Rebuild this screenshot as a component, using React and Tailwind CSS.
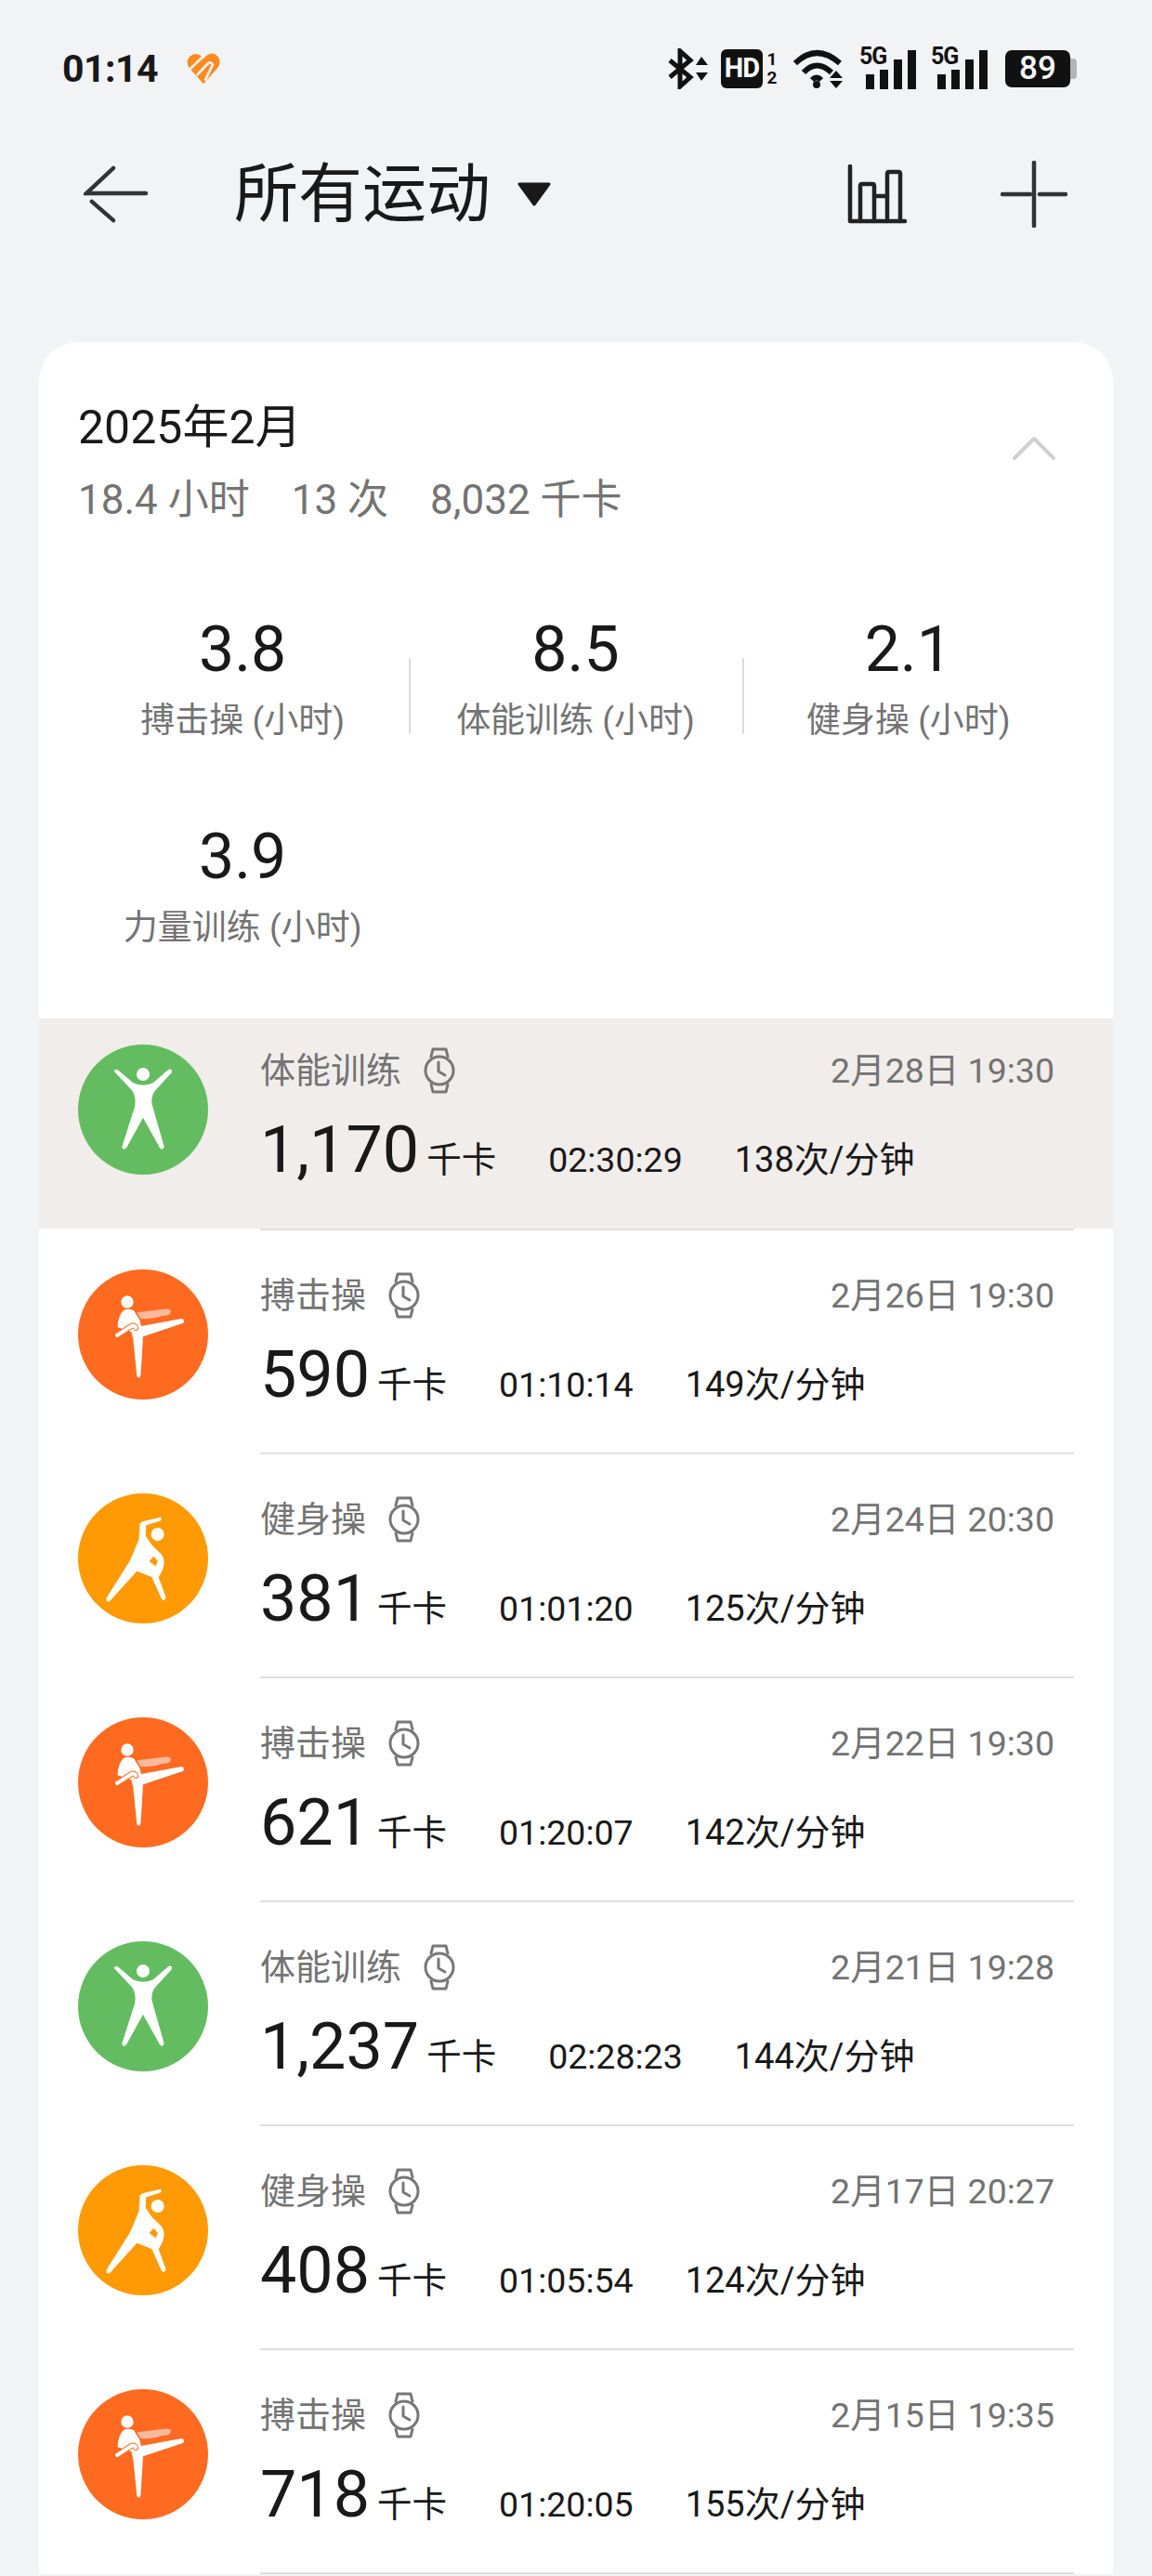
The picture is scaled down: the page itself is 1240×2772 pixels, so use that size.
import React from 'react';

const font = 'font-["Roboto","Noto_Sans_CJK_SC",sans-serif]';

const stats = [
  { value: '3.8', label: '搏击操 (小时)' },
  { value: '8.5', label: '体能训练 (小时)', divider: true },
  { value: '2.1', label: '健身操 (小时)', divider: true },
  { value: '3.9', label: '力量训练 (小时)' },
];

const workouts = [
  { kind: 'fit', name: '体能训练', kcal: '1,170', time: '02:30:29', rate: '138次/分钟', date: '2月28日 19:30' },
  { kind: 'box', name: '搏击操', kcal: '590', time: '01:10:14', rate: '149次/分钟', date: '2月26日 19:30' },
  { kind: 'aer', name: '健身操', kcal: '381', time: '01:01:20', rate: '125次/分钟', date: '2月24日 20:30' },
  { kind: 'box', name: '搏击操', kcal: '621', time: '01:20:07', rate: '142次/分钟', date: '2月22日 19:30' },
  { kind: 'fit', name: '体能训练', kcal: '1,237', time: '02:28:23', rate: '144次/分钟', date: '2月21日 19:28' },
  { kind: 'aer', name: '健身操', kcal: '408', time: '01:05:54', rate: '124次/分钟', date: '2月17日 20:27' },
  { kind: 'box', name: '搏击操', kcal: '718', time: '01:20:05', rate: '155次/分钟', date: '2月15日 19:35' },
];

// figures are drawn in a 420 box
const FitFigure = () => (
  <svg viewBox="72 72 420 420" className="w-full h-full">
    <circle cx="282" cy="168" r="21" fill="#fff" />
    <path fill="#fff" d="M188 158 Q192 148 202 155 L250 196 Q264 203 282 203 Q300 203 314 196 L364 153 Q376 148 375 162 L326 215 Q308 232 310 262 L350 402 Q346 416 336 406 L282 308 L228 406 Q216 416 214 402 L256 270 Q260 240 246 220 Z" />
  </svg>
);

const BoxFigure = () => (
  <svg viewBox="72 75 420 420" className="w-full h-full">
    <circle cx="231" cy="180" r="20" fill="#fff" />
    <path fill="#f9b99c" d="M262 214 L345 204 Q372 198 372 212 Q368 226 346 224 Q310 238 274 234 Z" />
    <path fill="#fff" d="M220 206 Q238 200 252 208 L270 236 L276 258 L406 234 Q418 236 412 248 L282 292 L274 420 Q268 430 262 420 L250 300 L244 276 L200 262 Q200 224 220 206 Z" />
    <path fill="none" stroke="#ff6a21" strokeWidth="18" strokeLinecap="round" d="M198 288 L244 258 Q256 254 258 264" />
    <path fill="none" stroke="#fff" strokeWidth="12" strokeLinecap="round" d="M198 288 L244 258 Q256 254 258 264" />
  </svg>
);

const AerFigure = () => (
  <svg viewBox="72 75 420 420" className="w-full h-full">
    <circle cx="329" cy="207" r="21" fill="#fff" />
    <path fill="#fff" d="M338 152 Q346 158 336 164 L292 178 L290 212 L312 244 L342 272 Q360 298 338 336 L332 346 L356 412 Q350 426 342 416 L310 345 L262 326 L174 424 Q160 428 164 412 L240 292 L268 225 L272 172 Q276 166 286 164 Z" />
    <path fill="#ff9a05" d="M302 294 L316 278 L330 294 L322 310 Z" />
  </svg>
);

const figures = {
  fit: { bg: 'bg-[#64bc61]', Figure: FitFigure },
  box: { bg: 'bg-[#ff6a21]', Figure: BoxFigure },
  aer: { bg: 'bg-[#ff9a05]', Figure: AerFigure },
};

const WatchIcon = () => (
  <svg viewBox="0 0 34 50" className="w-[34px] h-[50px]" fill="none" stroke="#777" strokeWidth="3" strokeLinejoin="round" strokeLinecap="round">
    <path d="M8 10 L10 2 H24 L26 10" />
    <path d="M8 40 L10 48 H24 L26 40" />
    <circle cx="17" cy="25" r="15" />
    <path d="M16 16 V26 L23 30" />
  </svg>
);

const Signal = () => (
  <div className="relative w-[60px] h-[44px]">
    <span className="absolute left-0 top-[-4px] text-[25px] leading-[26px] font-bold text-[#111] font-['Roboto'] tracking-[-1px]">5G</span>
    <div className="absolute bottom-0 left-[7px] flex items-end gap-[6px]">
      <div className="w-[9px] h-[16px] bg-[#111]" />
      <div className="w-[9px] h-[21px] bg-[#111]" />
      <div className="w-[9px] h-[32px] bg-[#111]" />
      <div className="w-[9px] h-[42px] bg-[#111]" />
    </div>
  </div>
);

const StatusBar = () => (
  <div className="h-[148px] flex items-center justify-between pl-[67px] pr-[81px]">
    <div className="flex items-center gap-[28px]">
      <span className="text-[41px] leading-none font-bold text-[#191919] font-['Roboto'] tracking-[-0.5px]">01:14</span>
      <svg viewBox="0 0 40 40" className="w-[42px] h-[36px]">
        <path fill="#ff8a1e" d="M20 38 L3 19 Q-2 11 4 5 Q10 0 16 4 L20 8 L24 4 Q31 -1 37 5 Q42 12 37 19 Z" />
        <path fill="none" stroke="#f1f3f5" strokeWidth="3" d="M3 21 L20 5 M12 28 L25 14 Q29 11 31 15 L22 34" />
      </svg>
    </div>
    <div className="flex items-center">
      <svg viewBox="0 0 44 44" className="w-[44px] h-[44px]" fill="none" stroke="#111" strokeWidth="5">
        <path d="M2 13 L24 31 L13 41 V3 L24 13 L2 31" />
        <path fill="#111" stroke="none" d="M36 9 L43 18 H30 Z M36 35 L43 26 H30 Z" />
      </svg>
      <div className="ml-[13px] w-[45px] h-[42px] rounded-[6px] bg-[#111] flex items-center justify-center text-white text-[29px] font-bold font-['Roboto'] tracking-[-1px]">HD</div>
      <div className="ml-[3px] w-[14px] flex flex-col items-center text-[19px] leading-[20px] font-bold text-[#111] font-['Roboto']">
        <span>1</span>
        <span>2</span>
      </div>
      <svg viewBox="0 0 54 44" className="ml-[16px] w-[54px] h-[44px]" fill="none" stroke="#111" strokeWidth="6">
        <path d="M2 16 Q25 -6 50 16" />
        <path d="M11 26 Q25 11 41 26" />
        <path d="M20 34 Q25 29 30 34" />
        <circle cx="25" cy="39" r="4" fill="#111" stroke="none" />
        <path fill="#111" stroke="none" d="M46 24 L53 32 H39 Z M46 43 L53 35 H39 Z" />
      </svg>
      <div className="ml-[17px]"><Signal /></div>
      <div className="ml-[17px]"><Signal /></div>
      <div className="ml-[20px] flex items-center">
        <div className="w-[70px] h-[40px] rounded-[7px] bg-[#111] flex items-center justify-center text-white text-[35px] font-medium font-['Roboto']">89</div>
        <div className="w-[7px] h-[22px] rounded-r-[4px] bg-[#b4b4b4]" />
      </div>
    </div>
  </div>
);

const NavBar = () => (
  <div className="h-[122px] flex items-center pl-[90px] pr-[99px]">
    <svg viewBox="0 0 72 64" className="w-[70px] h-[64px]" fill="none" stroke="#333" strokeWidth="4.5" strokeLinecap="round">
      <path d="M33 3 L3 31 H69" />
      <path d="M9 40 L33 61" />
    </svg>
    <span className="ml-[92px] text-[69px] leading-none text-[#191919]">所有运动</span>
    <svg viewBox="0 0 36 26" className="ml-[29px] w-[36px] h-[26px]">
      <path fill="#191919" stroke="#191919" strokeWidth="3" strokeLinejoin="round" d="M2 2 H34 L18 24 Z" />
    </svg>
    <svg viewBox="0 0 64 64" className="ml-auto w-[64px] h-[64px]" fill="none" stroke="#222" strokeWidth="4.5" strokeLinecap="round" strokeLinejoin="round">
      <path d="M3 2 V61 H62" />
      <path d="M14 61 V23 Q14 21 16 21 H27 Q29 21 29 23 V61" />
      <path d="M29 34 H43" />
      <path d="M43 61 V10 Q43 8 45 8 H55 Q57 8 57 10 V61" />
    </svg>
    <svg viewBox="0 0 72 72" className="ml-[101px] mr-[-8px] w-[72px] h-[72px]" fill="none" stroke="#333" strokeWidth="4.5" strokeLinecap="round">
      <path d="M2 36 H32" />
      <path d="M42 36 H70" />
      <path d="M36 2 V70" />
    </svg>
  </div>
);

const Stat = ({ value, label, divider }) => (
  <div className="relative flex flex-col items-center">
    {divider && <div className="absolute left-0 top-[49px] w-[2px] h-[82px] bg-[#dcdcdc]" />}
    <div className="text-[68px] leading-[80px] text-[#191919]">{value}</div>
    <div className="mt-[12px] text-[37px] leading-[50px] text-[#737373]">{label}</div>
  </div>
);

const WorkoutRow = ({ item, first }) => {
  const { bg, Figure } = figures[item.kind];
  return (
    <div>
      <div className={first ? 'flex px-[42px] pt-[28px] h-[226px] bg-[#f1edeb]' : 'flex px-[42px] pt-[42px] h-[239px]'}>
        <div className={`w-[140px] h-[140px] rounded-full overflow-hidden shrink-0 ${bg}`}>
          <Figure />
        </div>
        <div className="ml-[56px] flex-1 pr-[21px]">
          <div className="flex items-center h-[56px]">
            <span className="text-[38px] leading-[56px] text-[#737373]">{item.name}</span>
            <span className="ml-[24px] flex"><WatchIcon /></span>
            <span className="ml-auto text-[37.5px] leading-[56px] text-[#737373]">{item.date}</span>
          </div>
          <div className="mt-[27px] flex items-baseline text-[#191919]">
            <span className="text-[70px] leading-[60px]">{item.kcal}</span>
            <span className="ml-[8px] text-[37.5px]">千卡</span>
            <span className="ml-[56px] text-[37.5px]">{item.time}</span>
            <span className="ml-[56px] text-[38px]">{item.rate}</span>
          </div>
        </div>
      </div>
      <div className="ml-[238px] mr-[42px] h-[2px] bg-[#dedede]" />
    </div>
  );
};

export default function App() {
  return (
    <div className={`w-[1240px] h-[2772px] overflow-hidden bg-[#f1f3f5] ${font}`}>
      <StatusBar />
      <NavBar />
      <div className="mt-[98px] mx-[42px] rounded-t-[42px] bg-white">
        <div className="flex justify-between pl-[42px] pr-[62px] pt-[62px]">
          <div>
            <div className="text-[50px] leading-[60px] text-[#191919]">2025年2月</div>
            <div className="mt-[23px] flex gap-[45px] text-[44px] leading-[50px] text-[#737373]">
              <span>18.4 小时</span>
              <span>13 次</span>
              <span>8,032 千卡</span>
            </div>
          </div>
          <svg viewBox="0 0 46 26" className="mt-[39px] w-[46px] h-[26px]" fill="none" stroke="#d0d0d0" strokeWidth="4" strokeLinecap="round" strokeLinejoin="round">
            <path d="M2 24 L23 3 L44 24" />
          </svg>
        </div>
        <div className="mt-[96px] pb-[72px] pl-[40px] pr-[41px] grid grid-cols-3 gap-y-[81px]">
          {stats.map((s) => (
            <Stat key={s.label} {...s} />
          ))}
        </div>
        {workouts.map((w, i) => (
          <WorkoutRow key={w.date} item={w} first={i === 0} />
        ))}
      </div>
    </div>
  );
}
